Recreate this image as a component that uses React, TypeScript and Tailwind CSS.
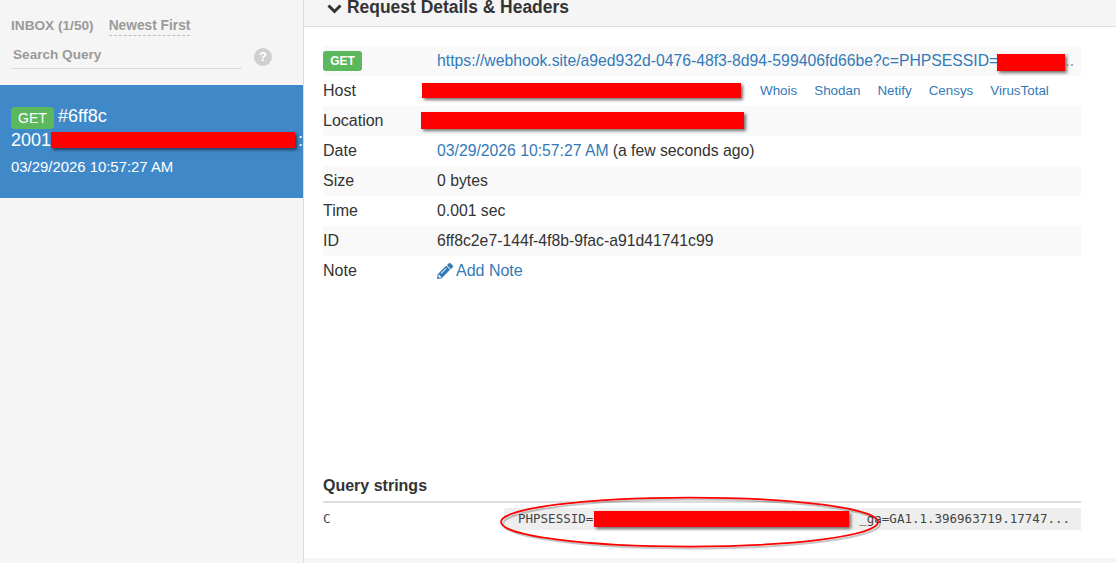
import React from "react";
import { FaPencilAlt } from "react-icons/fa";

const Redact = ({ className }: { className: string }) => (
  <span className={`inline-block bg-[#ff0000] shadow-[2px_2px_3px_rgba(0,0,0,0.55)] ${className}`} />
);

const Row = ({ label, shaded, children }: { label: React.ReactNode; shaded?: boolean; children?: React.ReactNode }) => (
  <div className={`flex h-[30px] items-center ${shaded ? "bg-[#f9f9f9]" : ""}`}>
    <div className="w-[114px] shrink-0 text-[#333]">{label}</div>
    <div className="flex min-w-0 flex-1 items-center whitespace-nowrap text-[15.75px] text-[#333]">{children}</div>
  </div>
);

const A = ({ children, className = "" }: { children: React.ReactNode; className?: string }) => (
  <span className={`text-[#337ab7] ${className}`}>{children}</span>
);

export default function App() {
  return (
    <div className="flex h-[563px] w-[1116px] overflow-hidden bg-white font-['Liberation_Sans',Arial,sans-serif] text-[16px] text-[#333]">
      <aside className="flex w-[304px] shrink-0 flex-col border-r border-[#dcdcdc] bg-[#f5f5f5]">
        <div className="flex h-[85px] flex-col pl-[11px] pr-[31px]">
          <div className="mt-[17px] flex items-start font-bold leading-[18px] text-[#9a9a9a]">
            <span className="text-[13.65px]">INBOX (1/50)</span>
            <span className="ml-[15px] border-b border-dashed border-[#bbb] pb-px text-[13.75px] leading-[17px]">Newest First</span>
          </div>
          <div className="mt-[8px] flex items-center">
            <div className="h-[25px] w-[232px] border-b border-[#ddd] pl-[2px] text-[13.6px] font-bold leading-[22px] text-[#9a9a9a]">Search Query</div>
            <span className="ml-[12px] flex h-[18px] w-[18px] items-center justify-center rounded-full bg-[#cfcfcf] text-[13px] font-bold leading-none text-white">?</span>
          </div>
        </div>
        <div className="flex h-[113px] flex-col bg-[#4089c9] pl-[11px] pt-[22px] text-white">
          <div className="flex h-[22px] items-center text-[18px]">
            <span className="flex h-[22px] w-[43px] items-center justify-center rounded-[4px] bg-[#5cb85c] text-[14px]">GET</span>
            <span className="mb-[3px] ml-[4px]">#6ff8c</span>
          </div>
          <div className="flex h-[22px] items-center whitespace-nowrap text-[18px]">
            <span>2001</span>
            <Redact className="h-[16px] w-[245px]" />
            <span className="ml-[3px]">:</span>
          </div>
          <div className="mt-[6px] text-[14.9px] leading-[20px]">03/29/2026 10:57:27 AM</div>
        </div>
      </aside>

      <main className="flex min-w-0 flex-1 flex-col">
        <div className="flex h-[27px] shrink-0 items-end border-b border-[#ddd] bg-[#f5f5f5] pb-[9px] pl-[23px]">
          <svg className="mb-[2px] mr-[5px] h-[12px] w-[15px] text-[#333]" viewBox="0 0 15 12" fill="none">
            <path d="M1.5 2.5 L7.5 8.5 L13.5 2.5" stroke="currentColor" strokeWidth="3" />
          </svg>
          <span className="text-[17.45px] font-bold leading-[20px] text-[#333]">Request Details &amp; Headers</span>
        </div>

        <div className="flex flex-1 flex-col pl-[19px] pr-[35px] pt-[19px]">
          <Row shaded label={<span className="flex h-[20px] w-[39px] items-center justify-center rounded-[3px] bg-[#5cb85c] text-[12px] font-bold text-white">GET</span>}>
            <div className="flex min-w-0 items-center">
              <A>https://webhook.site/a9ed932d-0476-48f3-8d94-599406fd66be?c=PHPSESSID=</A>
              <Redact className="ml-[-1px] mt-[2px] h-[17px] w-[68px]" />
              <span className="text-[#888]">..</span>
            </div>
          </Row>
          <Row label="Host">
            <Redact className="ml-[-15px] h-[15px] w-[319px]" />
            <div className="ml-[19px] flex gap-[17px] text-[13.4px]">
              <A>Whois</A>
              <A>Shodan</A>
              <A>Netify</A>
              <A>Censys</A>
              <A>VirusTotal</A>
            </div>
          </Row>
          <Row shaded label="Location">
            <Redact className="mb-[1px] ml-[-16px] h-[17px] w-[323px]" />
          </Row>
          <Row label="Date">
            <A>03/29/2026 10:57:27 AM</A>
            <span className="ml-[4px]">(a few seconds ago)</span>
          </Row>
          <Row shaded label="Size">0 bytes</Row>
          <Row label="Time">0.001 sec</Row>
          <Row shaded label="ID">6ff8c2e7-144f-4f8b-9fac-a91d41741c99</Row>
          <Row label="Note">
            <FaPencilAlt className="mr-[3px] h-[16px] w-[16px] text-[#337ab7]" />
            <A className="text-[16px]">Add Note</A>
          </Row>

          <div className="mt-auto">
            <div className="border-b-2 border-[#ddd] pb-[5px] text-[16px] font-bold leading-[20px] text-[#333]">Query strings</div>
            <div className="mt-[5px] flex h-[22px] items-center font-['DejaVu_Sans_Mono',monospace] text-[12.5px] text-[#444]">
              <div className="w-[181px] shrink-0">C</div>
              <div className="flex h-[22px] flex-1 items-center whitespace-nowrap rounded-l-[3px] bg-[#eeeeee] pl-[14px]">
                <span>PHPSESSID=</span>
                <Redact className="ml-[1px] h-[16px] w-[255px]" />
                <span className="ml-[10px]">_ga=GA1.1.396963719.17747...</span>
              </div>
            </div>
            <div className="h-[28px]" />
          </div>
        </div>
        <div className="h-[5px] shrink-0 bg-[#f5f5f5]" />
      </main>

      <svg className="pointer-events-none absolute left-[495px] top-[492px]" width="392" height="60" viewBox="0 0 392 60" fill="none">
        <ellipse cx="194.5" cy="30" rx="188.5" ry="24.5" stroke="#000" strokeOpacity="0.22" strokeWidth="2" transform="translate(2 2)" />
        <ellipse cx="194.5" cy="30" rx="188.5" ry="24.5" stroke="#f00" strokeWidth="1.75" />
      </svg>
    </div>
  );
}
